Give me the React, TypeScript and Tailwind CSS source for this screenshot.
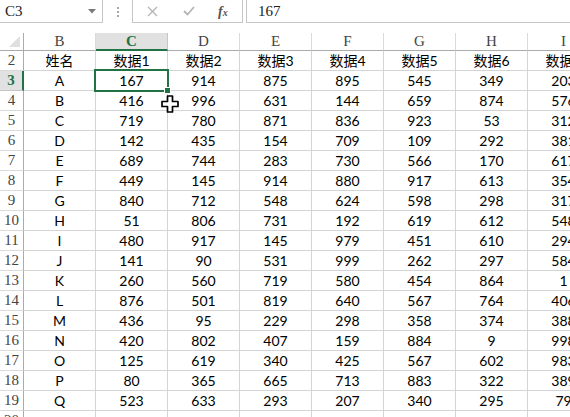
import React from 'react'

const columns = ['B', 'C', 'D', 'E', 'F', 'G', 'H', 'I']
const headerRow = ['姓名', '数据1', '数据2', '数据3', '数据4', '数据5', '数据6', '数据7']

const dataRows: (string | number)[][] = [
  ['A', 167, 914, 875, 895, 545, 349, 203],
  ['B', 416, 996, 631, 144, 659, 874, 576],
  ['C', 719, 780, 871, 836, 923, 53, 312],
  ['D', 142, 435, 154, 709, 109, 292, 381],
  ['E', 689, 744, 283, 730, 566, 170, 617],
  ['F', 449, 145, 914, 880, 917, 613, 354],
  ['G', 840, 712, 548, 624, 598, 298, 317],
  ['H', 51, 806, 731, 192, 619, 612, 548],
  ['I', 480, 917, 145, 979, 451, 610, 294],
  ['J', 141, 90, 531, 999, 262, 297, 584],
  ['K', 260, 560, 719, 580, 454, 864, 1],
  ['L', 876, 501, 819, 640, 567, 764, 406],
  ['M', 436, 95, 229, 298, 358, 374, 388],
  ['N', 420, 802, 407, 159, 884, 9, 998],
  ['O', 125, 619, 340, 425, 567, 602, 983],
  ['P', 80, 365, 665, 713, 883, 322, 389],
  ['Q', 523, 633, 293, 207, 340, 295, 79],
]

const cellFont = { fontFamily: '"Lato", "Noto Sans CJK SC", sans-serif' }
// SimSun-like thin latin for headers / formula bar
const headFont = { fontFamily: '"Liberation Serif", "DejaVu Serif", serif' }

function FormulaBar() {
  return (
    <div className="flex h-[23px] items-stretch text-[15px] text-[#222]" style={headFont}>
      {/* Name box */}
      <div className="flex w-[103px] items-center justify-between border-r border-b border-[#c6c6c6] pl-[5px] pr-[6px]">
        <span>C3</span>
        <svg width="8" height="5" viewBox="0 0 8 5">
          <path d="M0 0 H8 L4 4.5 Z" fill="#7a7a7a" />
        </svg>
      </div>
      {/* Grip dots */}
      <div className="flex w-[29px] flex-col items-center justify-center gap-[2px]">
        <span className="h-[2px] w-[2px] bg-[#a6a6a6]" />
        <span className="h-[2px] w-[2px] bg-[#a6a6a6]" />
        <span className="h-[2px] w-[2px] bg-[#a6a6a6]" />
      </div>
      {/* Cancel / Enter / fx */}
      <div className="relative flex w-[111px] items-center border-x border-b border-[#c6c6c6]">
        <svg className="absolute left-[14px] top-[6px]" width="11" height="11" viewBox="0 0 11 11">
          <path d="M1 1 L10 10 M10 1 L1 10" stroke="#b4b4b4" strokeWidth="1.3" />
        </svg>
        <svg className="absolute left-[50px] top-[6px]" width="12" height="10" viewBox="0 0 12 10">
          <path d="M1 5 L4.5 8.5 L11 1" stroke="#b4b4b4" strokeWidth="1.8" fill="none" />
        </svg>
        <span className="absolute left-[85px] top-[1px] text-[14px] font-bold italic text-[#555]">
          f<span className="text-[10px]">x</span>
        </span>
      </div>
      <div className="w-[3px]" />
      {/* Formula input */}
      <div className="flex flex-1 items-center border-l border-b border-[#c6c6c6] pl-[11px]">
        <span>167</span>
      </div>
    </div>
  )
}

function CellCursor() {
  return (
    <svg className="absolute left-[161px] top-[95px]" width="18" height="18" viewBox="0 0 18 18">
      <path
        d="M6.5 1 H11.5 V6.5 H17 V11.5 H11.5 V17 H6.5 V11.5 H1 V6.5 H6.5 Z"
        fill="#fff"
        stroke="#000"
        strokeWidth="1.7"
        strokeLinejoin="round"
      />
    </svg>
  )
}

export default function App() {
  const allRows = [headerRow as (string | number)[], ...dataRows, Array(8).fill('')]

  return (
    <div className="relative h-[417px] w-[570px] overflow-hidden bg-white">
      <FormulaBar />
      <div className="h-[10px]" />

      {/* Column headers */}
      <div className="flex h-[18px]">
        <div className="relative w-[24px] shrink-0 border-r border-b border-[#ababab]">
          <svg className="absolute right-[3px] bottom-[3px]" width="11" height="11" viewBox="0 0 11 11">
            <path d="M11 0 V11 H0 Z" fill="#dfdfdf" />
          </svg>
        </div>
        {columns.map((c) =>
          c === 'C' ? (
            <div
              key={c}
              className="flex w-[72px] shrink-0 items-center justify-center border-r border-[#c6c6c6] border-b-2 border-b-[#217346] bg-[#e1e1e1] text-[15px] font-bold text-[#217346]"
              style={headFont}
            >
              {c}
            </div>
          ) : (
            <div
              key={c}
              className="flex w-[72px] shrink-0 items-center justify-center border-r border-[#dadada] border-b border-b-[#ababab] text-[15px] text-[#444]"
              style={headFont}
            >
              {c}
            </div>
          ),
        )}
      </div>

      {/* Rows */}
      {allRows.map((row, i) => {
        const rowNum = i + 2
        const selected = rowNum === 3
        return (
          <div key={rowNum} className="flex h-[20px]">
            <div
              className={
                selected
                  ? 'flex w-[24px] shrink-0 items-center justify-center border-r-2 border-r-[#217346] border-b border-b-[#c6c6c6] bg-[#e1e1e1] text-[15px] font-bold text-[#217346]'
                  : 'flex w-[24px] shrink-0 items-center justify-center border-r border-r-[#ababab] border-b border-b-[#dadada] text-[15px] text-[#444]'
              }
              style={headFont}
            >
              {rowNum}
            </div>
            {row.map((v, j) => (
              <div
                key={j}
                className="flex w-[72px] shrink-0 items-center justify-center border-r border-b border-[#d4d4d4] text-[14px] text-black"
                style={cellFont}
              >
                {v}
              </div>
            ))}
          </div>
        )
      })}

      {/* Active cell C3 selection + fill handle */}
      <div className="absolute left-[94px] top-[69px] h-[23px] w-[75px] border-2 border-[#217346]" />
      <div className="absolute left-[164px] top-[87px] h-[7px] w-[7px] border border-white bg-[#217346]" />

      <CellCursor />
    </div>
  )
}
